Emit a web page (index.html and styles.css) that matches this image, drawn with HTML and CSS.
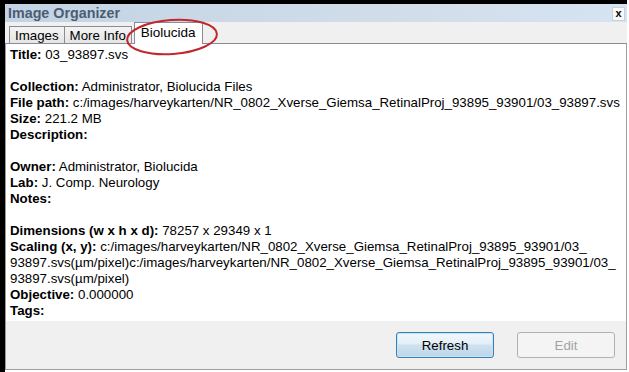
FILE: index.html
```html
<!DOCTYPE html>
<html lang="en">
<head>
    <meta charset="UTF-8">
    <title>Image Organizer</title>
    <link rel="stylesheet" href="styles.css">
</head>
<body>
    <div class="window">
        <div class="titlebar">
            <span class="title">Image Organizer</span>
            <span class="close">x</span>
        </div>

        <div class="tabstrip">
            <div class="tab">Images</div>
            <div class="tab">More Info</div>
            <div class="tab active">Biolucida</div>
            <svg class="circle" width="96" height="42" viewBox="0 0 96 42">
                <ellipse cx="48" cy="21" rx="45" ry="17" transform="rotate(-4 48 21)" fill="none" stroke="#c1272d" stroke-width="2"/>
            </svg>
        </div>

        <div class="panel">
            <div class="info">
                <div><b>Title:</b> 03_93897.svs</div>
                <div class="gap"></div>
                <div><b>Collection:</b> Administrator, Biolucida Files</div>
                <div><b>File path:</b> c:/images/harveykarten/NR_0802_Xverse_Giemsa_RetinalProj_93895_93901/03_93897.svs</div>
                <div><b>Size:</b> 221.2 MB</div>
                <div><b>Description:</b></div>
                <div class="gap"></div>
                <div><b>Owner:</b> Administrator, Biolucida</div>
                <div><b>Lab:</b> J. Comp. Neurology</div>
                <div><b>Notes:</b></div>
                <div class="gap"></div>
                <div><b>Dimensions (w x h x d):</b> 78257 x 29349 x 1</div>
                <div><b>Scaling (x, y):</b> c:/images/harveykarten/NR_0802_Xverse_Giemsa_RetinalProj_93895_93901/03_<br>93897.svs(&micro;m/pixel)c:/images/harveykarten/NR_0802_Xverse_Giemsa_RetinalProj_93895_93901/03_<br>93897.svs(&micro;m/pixel)</div>
                <div><b>Objective:</b> 0.000000</div>
                <div><b>Tags:</b></div>
            </div>

            <div class="actions">
                <button class="btn default">Refresh</button>
                <button class="btn" disabled>Edit</button>
            </div>
        </div>
    </div>
</body>
</html>
```

FILE: styles.css
```css
body {
    margin: 0;
    background-color: #fff;
    font-family: "Liberation Sans", Arial, sans-serif;
    font-size: 13.3px;
    color: #000;
}

.window {
    height: 372px;
    width: 627px;
    box-sizing: border-box;
    border-top: 4px solid #000;
    border-left: 5px solid #000;
    display: flex;
    flex-direction: column;
}

.titlebar {
    height: 18px;
    display: flex;
    align-items: center;
    justify-content: space-between;
    padding: 0 2px 0 3px;
    background: linear-gradient(to right, #c3d3e3, #d0dde9 60%, #d6e3f0);
}

.title {
    font-weight: bold;
    font-size: 14.3px;
    color: #4c5d72;
}

.close {
    width: 11px;
    height: 12px;
    margin-top: 2px;
    border: 1px solid #c8d0d8;
    background-color: #f7f9fb;
    font-weight: bold;
    font-size: 11px;
    line-height: 11px;
    text-align: center;
}

.tabstrip {
    position: relative;
    height: 21px;
    background-color: #f0f0f0;
    display: flex;
    align-items: flex-end;
    padding-left: 4px;
}

.tab {
    height: 17px;
    box-sizing: border-box;
    padding: 1px 5px 0 5px;
    border: 1px solid #898c95;
    border-bottom: none;
    background: linear-gradient(#f4f4f4, #e5e5e5);
    line-height: 16px;
    margin-right: -1px;
}

.tab.active {
    position: relative;
    height: 22px;
    margin-bottom: -1px;
    margin-left: 3px;
    padding: 2px 6px 0 6px;
    background: #fff;
    font-size: 13.5px;
    z-index: 1;
}

.circle {
    position: absolute;
    left: 119px;
    top: -6px;
    z-index: 2;
}

.panel {
    flex: 1;
    display: flex;
    flex-direction: column;
    border-top: 1px solid #898c95;
    border-left: 1px solid #9a9a9a;
    border-right: 1px solid #a0a0a0;
    border-bottom: 1px solid #a0a0a0;
    margin-bottom: 2px;
    background-color: #fff;
}

.info {
    flex: 1;
    padding: 3px 0 0 4px;
    line-height: 16px;
    white-space: nowrap;
}

.gap {
    height: 16px;
}

.actions {
    height: 48px;
    box-sizing: border-box;
    background-color: #f0f0f0;
    display: flex;
    justify-content: flex-end;
    gap: 23px;
    padding: 11px 11px 0 0;
}

.btn {
    width: 98px;
    height: 26px;
    border: 1px solid #adb2b5;
    border-radius: 3px;
    background-color: #f4f4f4;
    color: #a3a3a3;
    font-family: "Liberation Sans", Arial, sans-serif;
    font-size: 13.3px;
}

.btn.default {
    border-color: #3c7fb1;
    color: #000;
    background: linear-gradient(#f2f8fc, #e3eff8 45%, #cfe2f0 50%, #bcd5e8);
    box-shadow: inset 0 0 0 1px #c6e4f7;
}
```
